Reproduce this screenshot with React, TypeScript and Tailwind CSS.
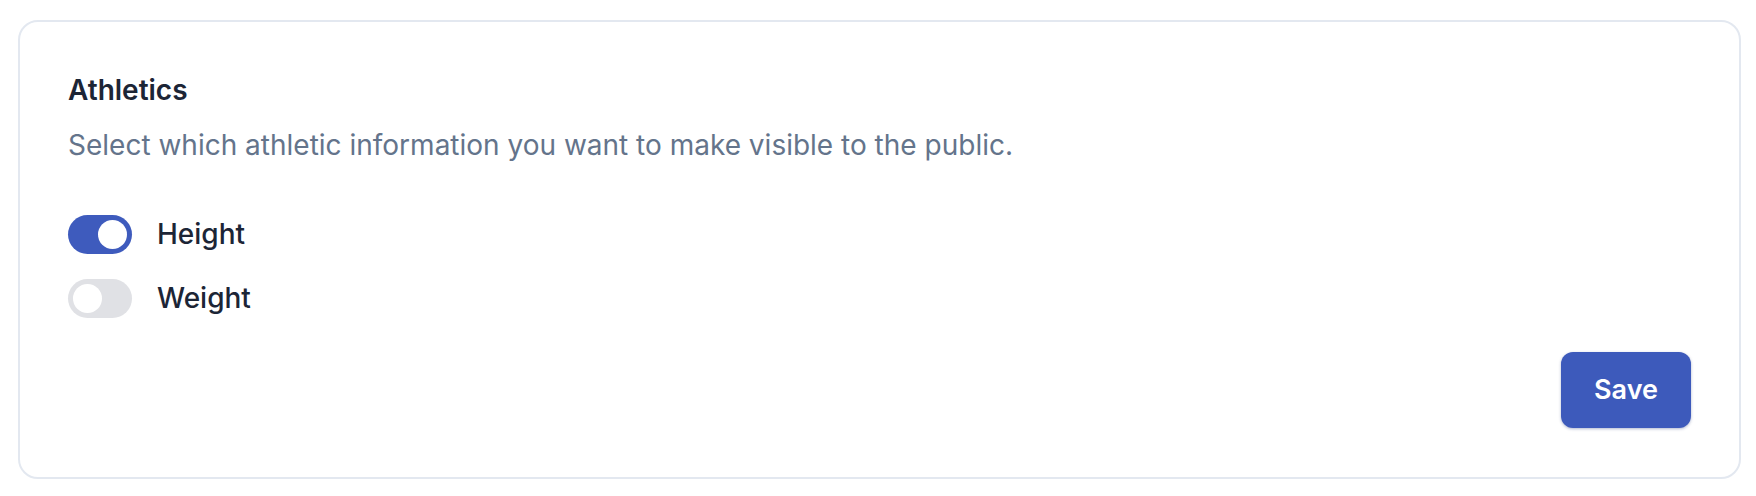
import { useState } from "react";

type Field = {
  key: string;
  label: string;
};

const fields: Field[] = [
  { key: "height", label: "Height" },
  { key: "weight", label: "Weight" },
];

const Toggle = ({ on, onClick }: { on: boolean; onClick: () => void }) => (
  <button
    type="button"
    onClick={onClick}
    className={`flex h-[39px] w-[64px] shrink-0 items-center rounded-full p-[5px] transition-colors ${
      on ? "justify-end bg-[#3e5bbd]" : "justify-start bg-[#e0e1e5]"
    }`}
  >
    <span className="block h-[29px] w-[29px] rounded-full bg-white" />
  </button>
);

const App = () => {
  const [visible, setVisible] = useState<Record<string, boolean>>({
    height: true,
    weight: false,
  });

  return (
    <div className="min-h-screen bg-white pl-[18px] pr-[15px] pt-[20px] pb-[17px] font-['Inter',sans-serif]">
      <div className="rounded-[20px] border-2 border-[#e3e8f0] bg-white px-[48px] pt-[48px] pb-[49px]">
        <h2 className="text-[28px] leading-[40px] font-semibold text-[#1c2536]">
          Athletics
        </h2>
        <p className="mt-[15px] text-[28px] leading-[40px] text-[#64748b]">
          Select which athletic information you want to make visible to the public.
        </p>

        <div className="mt-[49px] flex flex-col gap-[24px]">
          {fields.map((f) => (
            <label key={f.key} className="flex items-center gap-[25px]">
              <Toggle
                on={visible[f.key]}
                onClick={() =>
                  setVisible((v) => ({ ...v, [f.key]: !v[f.key] }))
                }
              />
              <span className="text-[28px] leading-[40px] font-medium text-[#1c2536]">
                {f.label}
              </span>
            </label>
          ))}
        </div>

        <div className="mt-[34px] flex justify-end">
          <button
            type="button"
            className="h-[76px] w-[130px] rounded-[12px] bg-[#3d5abb] text-[27px] font-semibold text-white shadow-[0_1px_3px_rgba(30,50,120,0.35)]"
          >
            Save
          </button>
        </div>
      </div>
    </div>
  );
};

export default App;
